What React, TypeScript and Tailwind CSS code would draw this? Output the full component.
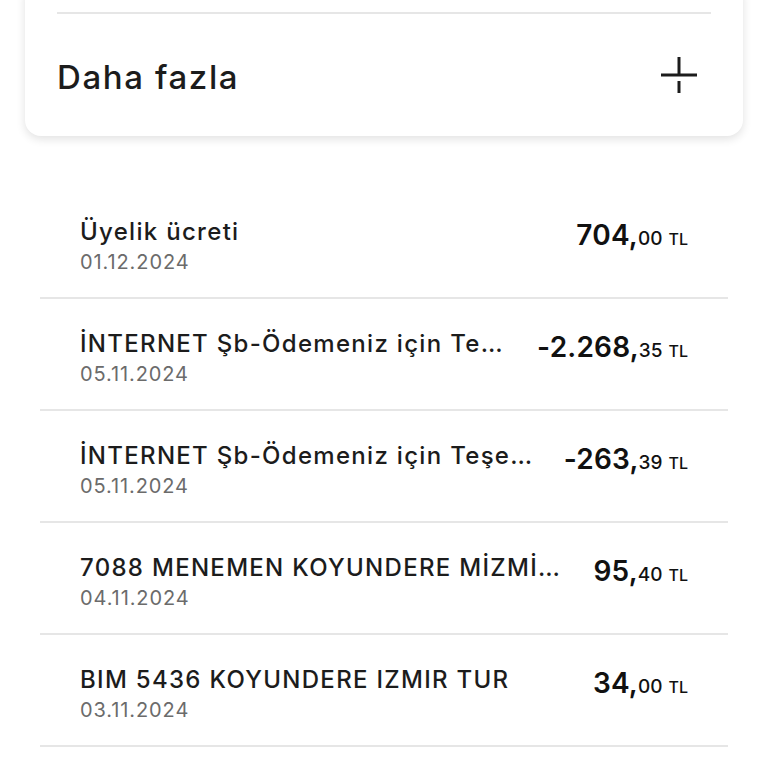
import React from 'react';

const rows = [
  { title: 'Üyelik ücreti', date: '01.12.2024', main: '704', dec: '00' },
  { title: 'İNTERNET Şb-Ödemeniz için Te…', date: '05.11.2024', main: '-2.268', dec: '35' },
  { title: 'İNTERNET Şb-Ödemeniz için Teşe…', date: '05.11.2024', main: '-263', dec: '39' },
  { title: '7088 MENEMEN KOYUNDERE MİZMİ…', date: '04.11.2024', main: '95', dec: '40' },
  { title: 'BIM 5436 KOYUNDERE IZMIR TUR', date: '03.11.2024', main: '34', dec: '00' },
];

const PlusIcon = () => (
  <svg width="38" height="38" viewBox="0 0 38 38" fill="none" stroke="#1c1c1c" strokeWidth="3">
    <line x1="1" y1="19" x2="37" y2="19" />
    <line x1="19" y1="1" x2="19" y2="19" />
    <line x1="19" y1="25" x2="19" y2="37" />
  </svg>
);

const App = () => {
  return (
    <div className="min-h-screen bg-white overflow-hidden" style={{ fontFamily: 'Inter, "Noto Sans", sans-serif' }}>
      <div className="ml-[25px] w-[718px] -mt-[20px] pt-[32px] bg-white rounded-[16px] shadow-[0_3px_10px_rgba(0,0,0,0.12)]">
        <div className="mx-[32px] h-[2px] bg-[#e6e6e6]"></div>
        <div className="h-[122px] flex items-center justify-between pl-[32px] pr-[45px]">
          <span className="text-[33px] pt-[5px] font-medium text-[#1c1c1c] tracking-[1.6px]">Daha fazla</span>
          <PlusIcon />
        </div>
      </div>

      <div className="mt-[51px] ml-[40px] w-[688px]">
        {rows.map((r, i) => (
          <div key={i} className="h-[112px] border-b-2 border-[#e6e6e6] flex items-start justify-between pl-[40px] pr-[40px] pt-[29px]">
            <div className="flex flex-col">
              <span className="text-[24px] leading-[32px] font-medium text-[#1c1c1c] tracking-[1.3px]">{r.title}</span>
              <span className="text-[20px] leading-[28px] text-[#6b6b6b] tracking-[0.9px]">{r.date}</span>
            </div>
            <div className="flex items-baseline pt-[1px] text-[#111]">
              <span className="text-[28px] leading-[36px] font-semibold tracking-[0.2px]">{r.main},</span>
              <span className="text-[19px] font-medium">{r.dec}</span>
              <span className="text-[16px] font-medium ml-[6px]">TL</span>
            </div>
          </div>
        ))}
      </div>
    </div>
  );
};

export default App;
